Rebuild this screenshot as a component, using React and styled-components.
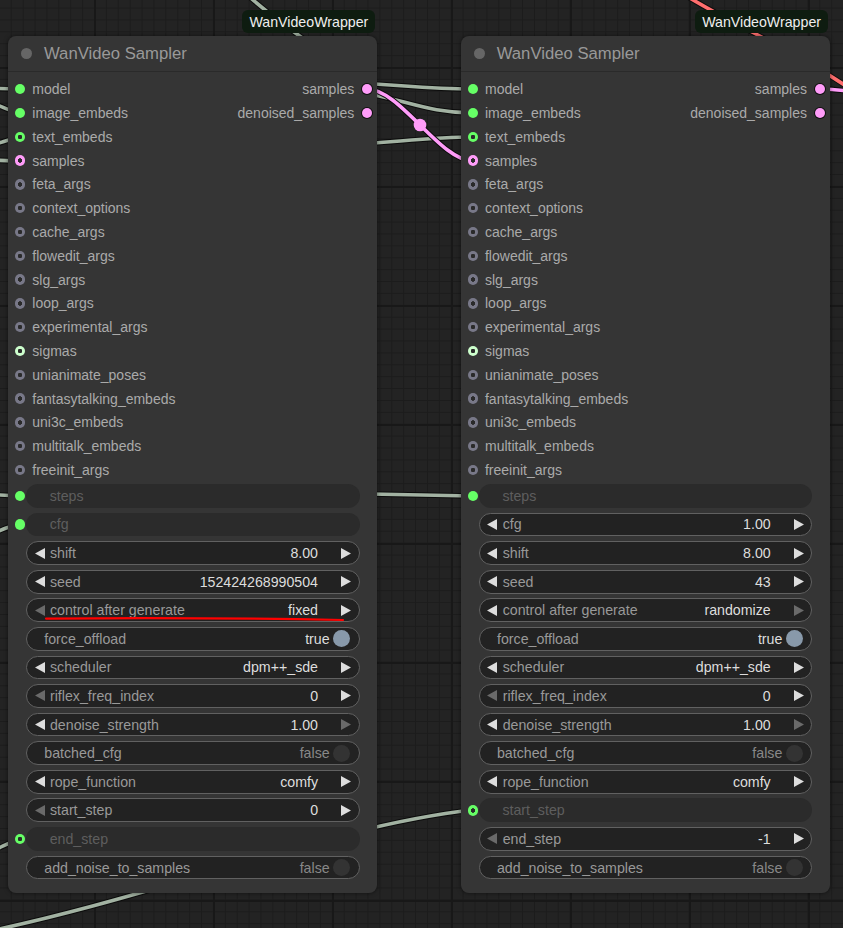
import styled, { createGlobalStyle } from "styled-components";

const GlobalStyle = createGlobalStyle`
    * { box-sizing: border-box; }
    body {
        margin: 0;
        background: #222;
        font-family: "Liberation Sans", Arial, sans-serif;
    }
`

const GREEN = "#6f6"
const PINK = "#ff9cf9"
const GREY = "#787888"
const PALE = "#cdffcd"
const WIRE = "#a2b2a2"

const Canvas = styled.div`
    position: relative;
    width: 843px;
    height: 928px;
    overflow: hidden;
    background-color: #232323;
    background-image:
        linear-gradient(to right, #181818 2px, transparent 2px),
        linear-gradient(to bottom, #181818 2px, transparent 2px),
        linear-gradient(to right, #1c1c1c 1px, transparent 1px),
        linear-gradient(to bottom, #1c1c1c 1px, transparent 1px);
    background-size: 119px 119px, 119px 119px, 11.9px 11.9px, 11.9px 11.9px;
    background-position: 94px 67px, 94px 67px, 94px 67px, 94px 67px;
`

const WireLayer = styled.svg`
    position: absolute;
    inset: 0;
    width: 843px;
    height: 928px;
`

const StyledNode = styled.div`
    position: absolute;
    left: ${p => p.$x}px;
    top: 36px;
    width: 369px;
    display: flex;
    flex-direction: column;
    background: #353535;
    border-radius: 8px;
    box-shadow: 0 0 4px rgba(0, 0, 0, 0.55);
`

const Badge = styled.div`
    position: absolute;
    top: -26px;
    right: 2px;
    height: 23px;
    padding: 0 7px;
    display: flex;
    align-items: center;
    border-radius: 6px;
    background: #0e1c10;
    color: #eee;
    font-size: 14.2px;
`

const Title = styled.div`
    height: 36px;
    display: flex;
    align-items: center;
    padding-left: 12.5px;
    gap: 12.2px;
    border-bottom: 1px solid #2a2a2a;
    color: #999;
    font-size: 16.7px;
`

const TitleDot = styled.span`
    width: 11px;
    height: 11px;
    border-radius: 50%;
    background: #666;
`

const Slots = styled.div`
    padding-top: 5.4px;
    display: flex;
    flex-direction: column;
`

const SlotRow = styled.div`
    height: 23.8px;
    display: flex;
    align-items: center;
    justify-content: space-between;
    padding: 0 4.5px 0 6.2px;
    font-size: 14px;
    color: #aaa;
`

const Side = styled.div`
    display: flex;
    align-items: center;
    gap: ${p => p.$gap}px;
`

const Gutter = styled.span`
    width: 11.5px;
    display: flex;
    justify-content: center;
    flex-shrink: 0;
`

const Dot = styled.span`
    width: 10.4px;
    height: 10.4px;
    border-radius: 50%;
    flex-shrink: 0;
    background: ${p => p.$ring
        ? `radial-gradient(circle, #2a2a2a 0 2px, ${p.$color} 2.4px)`
        : p.$color};
    box-shadow: ${p => p.$outline ? "0 0 0 1px #111" : "none"};
`

const Widgets = styled.div`
    margin-top: 2px;
    padding-bottom: 13.7px;
    display: flex;
    flex-direction: column;
    gap: 4.8px;
`

const WidgetRow = styled.div`
    height: 23.8px;
    display: flex;
    align-items: center;
    padding: 0 17.7px 0 6.2px;
`

const Box = styled.div`
    position: relative;
    flex: 1;
    height: 100%;
    display: flex;
    align-items: center;
    border-radius: 12px;
    font-size: 14.2px;
    background: ${p => p.$linked ? "#2b2b2b" : "#222"};
    border: 1px solid ${p => p.$linked ? "transparent" : "#616161"};
    padding: ${p => p.$pad};
`

const Label = styled.span`
    flex: 1;
    color: ${p => p.$linked ? "#5e5e5e" : "#999"};
    white-space: nowrap;
`

const Value = styled.span`
    color: ${p => p.$off ? "#888" : "#ddd"};
    white-space: nowrap;
`

const ArrowSvg = styled.svg`
    flex-shrink: 0;
    width: 10px;
    height: 11px;
    fill: ${p => p.$off ? "#6a6a6a" : "#ddd"};
`

const Knob = styled.span`
    width: 17px;
    height: 17px;
    margin-left: 3.2px;
    border-radius: 50%;
    background: ${p => p.$on ? "#8899aa" : "#333"};
`

const Mark = styled.svg`
    position: absolute;
    left: -1px;
    top: -1px;
    width: 333px;
    height: 24px;
    overflow: visible;
    pointer-events: none;
`

const Arrow = ({ dir, off }) => (
    <ArrowSvg $off={off} viewBox="0 0 10 11">
        {dir === "left"
            ? <polygon points="10,0 10,11 0,5.5" />
            : <polygon points="0,0 0,11 10,5.5" />}
    </ArrowSvg>
)

const Widget = ({ w }) => {
    if (w.kind === "linked") {
        return (
            <WidgetRow>
                <Gutter><Dot $color={GREEN} $ring={w.dot === "ring"} /></Gutter>
                <Box $linked $pad="0 0 0 22.7px"><Label $linked>{w.label}</Label></Box>
            </WidgetRow>
        )
    }
    if (w.kind === "toggle") {
        return (
            <WidgetRow>
                <Gutter />
                <Box $pad="0 8.8px 0 17.3px">
                    <Label>{w.label}</Label>
                    <Value $off={!w.value}>{w.value ? "true" : "false"}</Value>
                    <Knob $on={w.value} />
                </Box>
            </WidgetRow>
        )
    }
    return (
        <WidgetRow>
            <Gutter />
            <Box $pad="0 7.3px 0 7.6px">
                <Arrow dir="left" off={w.leftOff} />
                <Label style={{ marginLeft: "5.4px" }}>{w.label}</Label>
                <Value style={{ marginRight: "23.3px" }}>{w.value}</Value>
                <Arrow dir="right" off={w.rightOff} />
                {w.mark && (
                    <Mark viewBox="0 0 333 24">
                        <path d="M20 20.6 Q 170 19.2 317 22" stroke="#f00" strokeWidth="2.2" fill="none" strokeLinecap="round" />
                    </Mark>
                )}
            </Box>
        </WidgetRow>
    )
}

const inputs = [
    ["model", GREEN, false],
    ["image_embeds", GREEN, false],
    ["text_embeds", GREEN, true],
    ["samples", PINK, true],
    ["feta_args", GREY, true],
    ["context_options", GREY, true],
    ["cache_args", GREY, true],
    ["flowedit_args", GREY, true],
    ["slg_args", GREY, true],
    ["loop_args", GREY, true],
    ["experimental_args", GREY, true],
    ["sigmas", PALE, true],
    ["unianimate_poses", GREY, true],
    ["fantasytalking_embeds", GREY, true],
    ["uni3c_embeds", GREY, true],
    ["multitalk_embeds", GREY, true],
    ["freeinit_args", GREY, true],
]

const outputs = ["samples", "denoised_samples"]

const leftWidgets = [
    { kind: "linked", label: "steps", dot: "fill" },
    { kind: "linked", label: "cfg", dot: "fill" },
    { kind: "number", label: "shift", value: "8.00" },
    { kind: "number", label: "seed", value: "152424268990504" },
    { kind: "number", label: "control after generate", value: "fixed", leftOff: true, mark: true },
    { kind: "toggle", label: "force_offload", value: true },
    { kind: "number", label: "scheduler", value: "dpm++_sde" },
    { kind: "number", label: "riflex_freq_index", value: "0", leftOff: true },
    { kind: "number", label: "denoise_strength", value: "1.00", rightOff: true },
    { kind: "toggle", label: "batched_cfg", value: false },
    { kind: "number", label: "rope_function", value: "comfy" },
    { kind: "number", label: "start_step", value: "0", leftOff: true },
    { kind: "linked", label: "end_step", dot: "ring" },
    { kind: "toggle", label: "add_noise_to_samples", value: false },
]

const rightWidgets = [
    { kind: "linked", label: "steps", dot: "fill" },
    { kind: "number", label: "cfg", value: "1.00" },
    { kind: "number", label: "shift", value: "8.00" },
    { kind: "number", label: "seed", value: "43" },
    { kind: "number", label: "control after generate", value: "randomize", rightOff: true },
    { kind: "toggle", label: "force_offload", value: true },
    { kind: "number", label: "scheduler", value: "dpm++_sde" },
    { kind: "number", label: "riflex_freq_index", value: "0", leftOff: true },
    { kind: "number", label: "denoise_strength", value: "1.00", rightOff: true },
    { kind: "toggle", label: "batched_cfg", value: false },
    { kind: "number", label: "rope_function", value: "comfy" },
    { kind: "linked", label: "start_step", dot: "ring" },
    { kind: "number", label: "end_step", value: "-1", leftOff: true },
    { kind: "toggle", label: "add_noise_to_samples", value: false },
]

const SamplerNode = ({ x, widgets }) => (
    <StyledNode $x={x}>
        <Badge>WanVideoWrapper</Badge>
        <Title><TitleDot />WanVideo Sampler</Title>
        <Slots>
            {inputs.map(([name, color, ring], i) => (
                <SlotRow key={name + i}>
                    <Side $gap={6.3}>
                        <Gutter><Dot $color={color} $ring={ring} /></Gutter>
                        {name}
                    </Side>
                    {outputs[i] && (
                        <Side $gap={7}>
                            {outputs[i]}
                            <Gutter><Dot $color={PINK} $outline /></Gutter>
                        </Side>
                    )}
                </SlotRow>
            ))}
        </Slots>
        <Widgets>
            {widgets.map((w, i) => <Widget key={i} w={w} />)}
        </Widgets>
    </StyledNode>
)

const greyWires = [
    "M244 -8 C 266 12, 290 30, 320 50",
    "M-20 88 L 20 89",
    "M-20 100 C 0 104, 5 110, 20 113",
    "M-20 148 C 0 144, 5 140, 20 137",
    "M-20 160 C 0 160, 10 161, 20 161",
    "M-20 494 L 20 496",
    "M-10 535 C 5 528, 10 526, 20 525",
    "M-10 852 C 2 847, 10 842, 20 839",
    "M-30 935 C 150 900, 330 825, 473 810",
    "M300 80 C 400 84, 420 89, 473 89",
    "M330 88 C 400 95, 420 113, 473 113",
    "M330 146 C 400 142, 430 137, 473 137",
    "M370 494 L 473 496",
]

const Wire = ({ d, color, width }) => (
    <g fill="none" strokeLinecap="round">
        <path d={d} stroke="#0c0c0c" strokeWidth={width + 2} />
        <path d={d} stroke={color} strokeWidth={width} />
    </g>
)

const App = () => {
    return (
        <>
            <GlobalStyle />
            <Canvas>
                <WireLayer viewBox="0 0 843 928">
                    {greyWires.map((d, i) => <Wire key={i} d={d} color={WIRE} width={3.6} />)}
                    <Wire d="M680 -8 C 740 30, 800 50, 880 110" color="#ff6e6e" width={3.6} />
                    <Wire d="M820 89 C 850 89, 860 95, 880 100" color={PINK} width={3.6} />
                    <Wire d="M367 89 C 400 89, 440 161, 473 161" color={PINK} width={3.6} />
                    <circle cx="420" cy="125" r="6.3" fill={PINK} />
                </WireLayer>
                <SamplerNode x={8.3} widgets={leftWidgets} />
                <SamplerNode x={461} widgets={rightWidgets} />
            </Canvas>
        </>
    )
}

export default App;
